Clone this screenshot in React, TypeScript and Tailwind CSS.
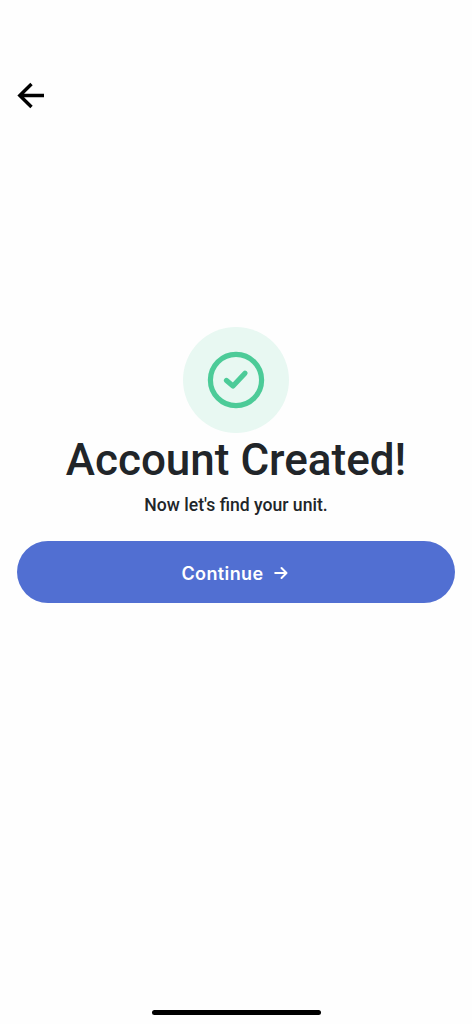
export default function App() {
  return (
    <div className="flex h-[1024px] w-[472px] flex-col overflow-hidden bg-[#fefefe] font-['Roboto',sans-serif] text-[#212529]">
      <header className="px-[17px] pt-[82px]">
        <button aria-label="Back" className="block">
          <svg width="28" height="27" viewBox="0 0 28 27" fill="none" stroke="#000" strokeWidth="3.4">
            <path d="M27 13.5H3M14.5 2L2.8 13.5L14.5 25" />
          </svg>
        </button>
      </header>

      <main className="mt-[218px] flex flex-col items-center px-[17px]">
        <div className="flex size-[106px] items-center justify-center rounded-full bg-[#e8f8f2]">
          <svg width="58" height="58" viewBox="0 0 58 58" fill="none" stroke="#4ccb98" strokeWidth="5.2">
            <circle cx="29" cy="29" r="25.6" />
            <path d="M19.5 29.5L26 35L38 22.2" strokeLinecap="round" strokeLinejoin="round" />
          </svg>
        </div>
        <h1 className="mt-[1px] text-[44px] leading-[53px] font-medium whitespace-nowrap">Account Created!</h1>
        <p className="mt-[5px] text-[17.6px] leading-[27px] font-medium">Now let's find your unit.</p>
        <button className="mt-[22px] flex h-[62px] w-full items-center justify-center gap-[10px] rounded-full bg-[#516fd2] text-white">
          <span className="pt-[2px] font-['Inter',sans-serif] text-[18px] font-semibold tracking-[0.4px]">Continue</span>
          <svg className="mt-px mr-[3px]" width="14" height="14" viewBox="0 0 14 14" fill="none" stroke="currentColor" strokeWidth="2">
            <path d="M1.2 7H12M7.5 2L12.5 7L7.5 12" strokeLinecap="round" strokeLinejoin="round" />
          </svg>
        </button>
      </main>

      <footer className="mt-auto flex justify-center pb-[9px]">
        <div className="h-[5px] w-[169px] rounded-full bg-black" />
      </footer>
    </div>
  );
}
